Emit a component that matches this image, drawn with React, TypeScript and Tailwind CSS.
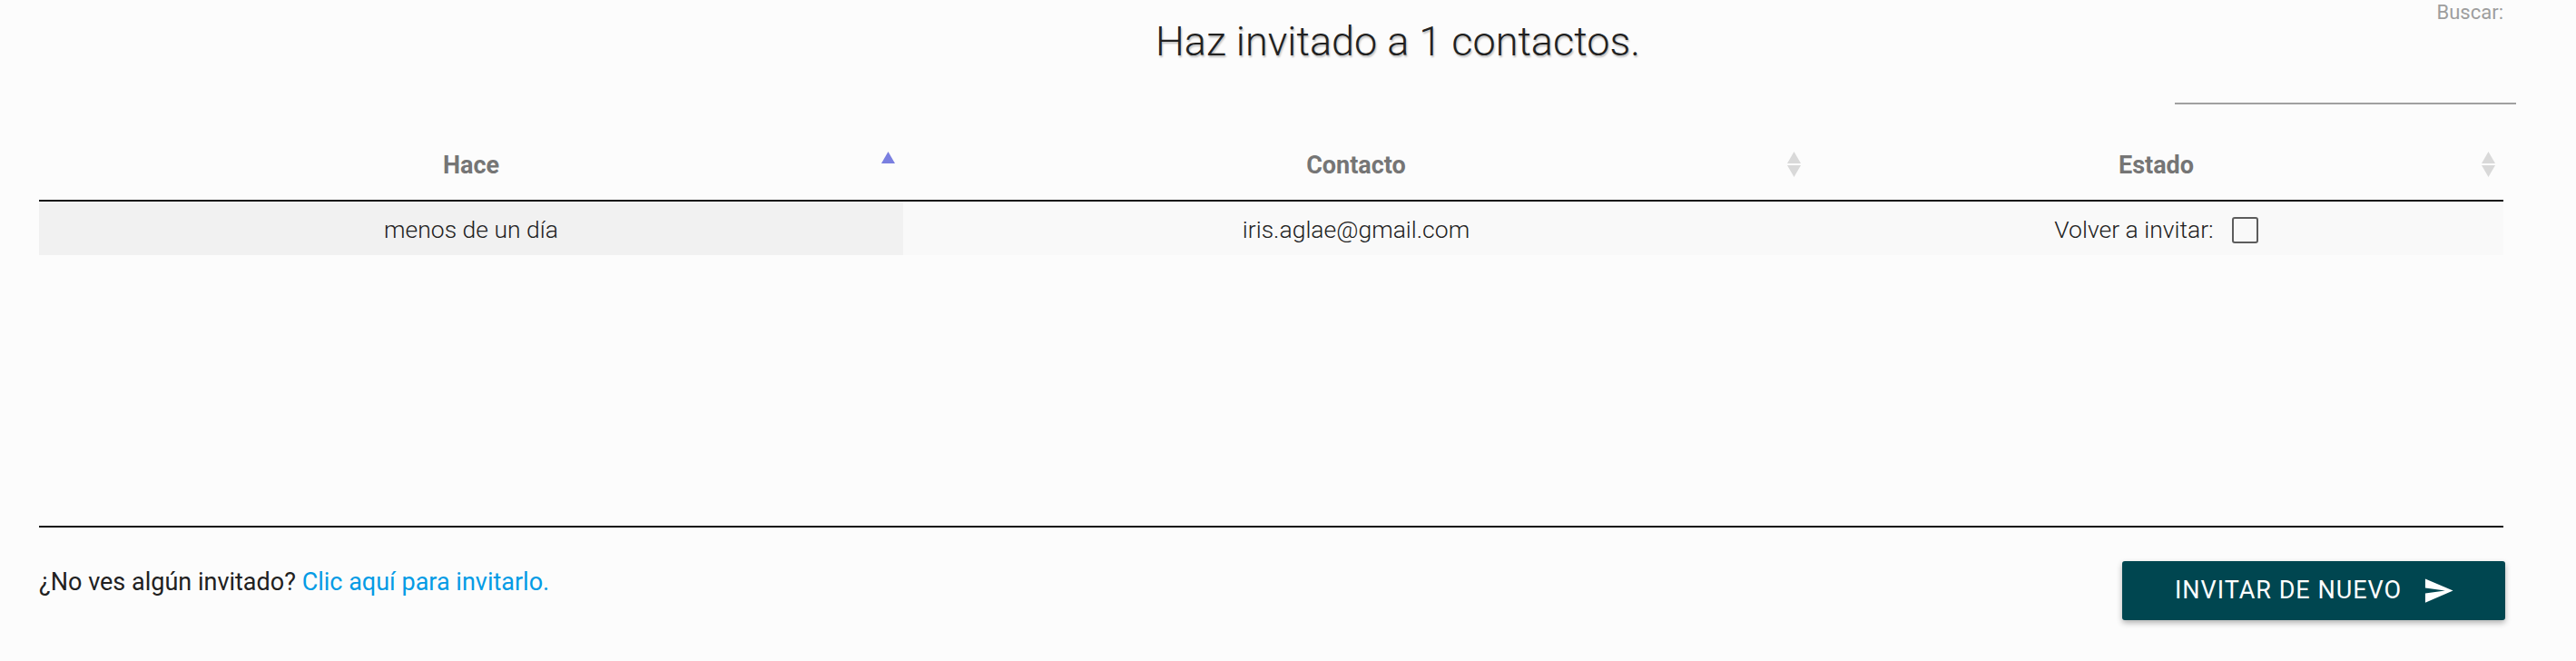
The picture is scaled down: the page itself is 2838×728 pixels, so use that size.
import React from "react";

const font = { fontFamily: "Roboto, 'Noto Sans', sans-serif" };

function SortIcon({ active }: { active?: boolean }) {
  return (
    <svg width="15" height="28" viewBox="0 0 15 28" className="absolute right-[9px] top-[15px]">
      <path d="M7.5 0 L15 13 L0 13Z" fill={active ? "#7a7fe0" : "#d9d9d9"} />
      {!active && <path d="M0 15 L15 15 L7.5 28Z" fill="#d9d9d9" />}
    </svg>
  );
}

function SendIcon() {
  return (
    <svg width="35" height="35" viewBox="0 0 24 24" fill="white">
      <path d="M2.01 21L23 12 2.01 3 2 10l15 2-15 2z" />
    </svg>
  );
}

export default function App() {
  const columns = [
    { label: "Hace", active: true },
    { label: "Contacto" },
    { label: "Estado" },
  ];

  return (
    <div className="min-h-screen w-full bg-[#fcfcfc] pl-[43px] pr-[66px]" style={font}>
      {/* Title + search filter */}
      <div className="flex h-[152px] items-start">
        <div className="flex-1 pl-[641px] pt-[19px] text-center">
          <h1 className="text-[45px] font-light leading-[54px] text-[#212121] [text-shadow:1px_2px_2px_rgba(0,0,0,0.25)]">
            Haz invitado a 1 contactos.
          </h1>
        </div>
        <div className="flex w-[376px] flex-col items-end pt-[2px]">
          <label className="mr-[14px] text-[22px] leading-[24px] text-[#9e9e9e]">Buscar:</label>
          <div className="mt-[63px] h-[26px] w-full border-b-2 border-[#a0a0a0]" />
        </div>
      </div>

      {/* Table */}
      <div className="mr-[14px] h-[429px] border-b-2 border-[#111]">
        <div className="grid grid-cols-[952px_998px_1fr] border-b-2 border-[#111]">
          {columns.map((c) => (
            <div key={c.label} className="relative flex h-[68px] items-center justify-center pb-[8px]">
              <span className="text-[27px] font-bold text-[#757575]">{c.label}</span>
              <SortIcon active={c.active} />
            </div>
          ))}
        </div>
        <div className="grid h-[59px] grid-cols-[952px_998px_1fr] text-[26.5px] font-light text-[#212121]">
          <div className="flex items-center justify-center bg-[#f1f1f1] pt-[3px]">menos de un día</div>
          <div className="flex items-center justify-center bg-[#f9f9f9] pt-[3px]">iris.aglae@gmail.com</div>
          <div className="flex items-center justify-center gap-[20px] bg-[#f9f9f9] pt-[3px]">
            <span>Volver a invitar:</span>
            <span className="inline-block h-[29px] w-[29px] rounded-[3px] border-2 border-[#5c5c5c]" />
          </div>
        </div>
      </div>

      {/* Footer */}
      <div className="mr-[12px] flex items-start justify-between pt-[37px]">
        <p className="pt-[3px] text-[27px] text-[#212121]">
          ¿No ves algún invitado? <a className="text-[#039be5]">Clic aquí para invitarlo.</a>
        </p>
        <button className="flex h-[65px] w-[422px] items-center justify-center gap-[23px] rounded-[3px] bg-[#004650] pl-[2px] text-[27px] font-normal tracking-[1px] text-white shadow-[0_3px_6px_rgba(0,0,0,0.3)]">
          INVITAR DE NUEVO
          <SendIcon />
        </button>
      </div>
    </div>
  );
}
